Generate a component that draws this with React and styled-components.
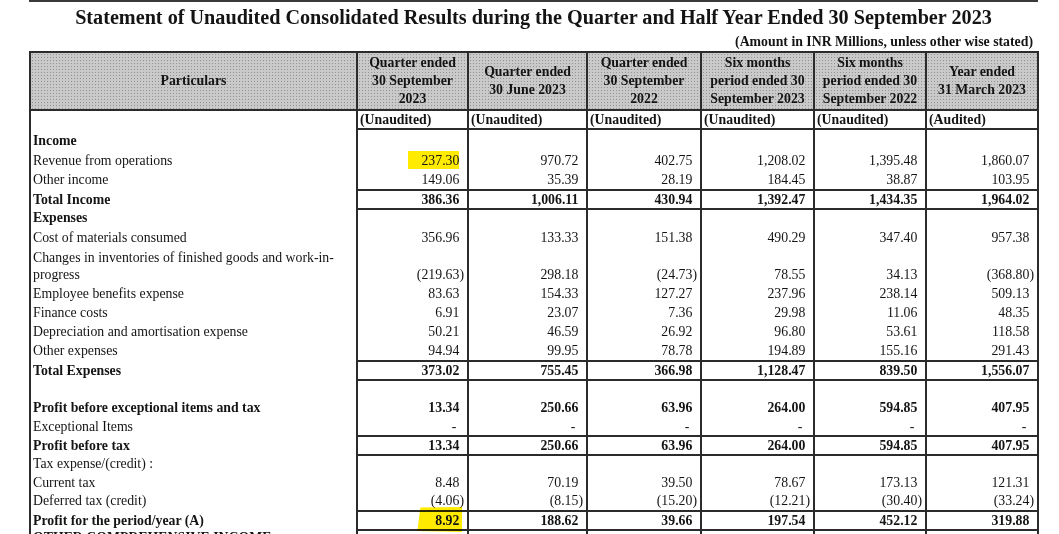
import React from "react";
import styled, { createGlobalStyle } from "styled-components";

const GlobalStyle = createGlobalStyle`
  html, body {
    margin: 0;
    padding: 0;
    background: #ffffff;
  }
  body {
    font-family: "Liberation Serif", "Times New Roman", serif;
    color: #141414;
  }
`;

const COLS = "327px 111px 119px 114px 113px 112px 112px";
const LINE = "2px solid #2b2b2b";

const Page = styled.div`
  width: 1059px;
  height: 534px;
  overflow: hidden;
  padding-left: 29px;
  box-sizing: border-box;
`;

const TopRule = styled.div`
  width: 1009px;
  border-top: 2px solid #3a3a3a;
`;

const Title = styled.h1`
  margin: 4px 0 0;
  width: 1009px;
  text-align: center;
  font-size: 20.2px;
  line-height: 23px;
  font-weight: bold;
`;

const Note = styled.div`
  margin-top: 5px;
  width: 1004px;
  text-align: right;
  font-size: 13.8px;
  line-height: 16px;
  font-weight: bold;
`;

const Table = styled.div`
  margin-top: 1px;
  width: 1010px;
  border-left: ${LINE};
  border-top: ${LINE};
  box-sizing: border-box;
  font-size: 13.8px;
`;

const Row = styled.div`
  display: grid;
  grid-template-columns: ${COLS};
  height: ${(p) => p.$h}px;
`;

const HeadCell = styled.div`
  display: flex;
  align-items: center;
  justify-content: center;
  text-align: center;
  font-weight: bold;
  line-height: 18px;
  box-sizing: border-box;
  border-right: ${LINE};
  border-bottom: ${LINE};
  background-color: #c9c9c9;
  background-image: radial-gradient(circle, rgba(95, 95, 95, 0.5) 0.7px, transparent 0.9px);
  background-size: 3px 3px;
`;

const AuditCell = styled.div`
  display: flex;
  align-items: center;
  padding-left: 2px;
  font-weight: bold;
  line-height: 17px;
  box-sizing: border-box;
  border-right: ${LINE};
  border-bottom: ${(p) => (p.$blank ? "none" : LINE)};
`;

const LabelCell = styled.div`
  display: flex;
  flex-direction: column;
  justify-content: center;
  padding-left: 2px;
  white-space: nowrap;
  font-weight: ${(p) => (p.$bold ? "bold" : "normal")};
  line-height: ${(p) => (p.$wrap ? "17px" : "19px")};
  box-sizing: border-box;
  border-right: ${LINE};
`;

const ValueCell = styled.div`
  display: flex;
  justify-content: flex-end;
  align-items: ${(p) => (p.$end ? "flex-end" : "center")};
  padding-right: 3px;
  padding-bottom: ${(p) => (p.$end ? "1px" : "0")};
  line-height: 17px;
  white-space: nowrap;
  font-weight: ${(p) => (p.$bold ? "bold" : "normal")};
  box-sizing: border-box;
  border-right: ${LINE};
  border-top: ${(p) => (p.$rule ? LINE : "none")};
  border-bottom: ${(p) => (p.$rule ? LINE : "none")};
`;

const Num = styled.span`
  padding-right: ${(p) => (p.$neg ? "0" : p.$dash ? "calc(0.333em + 3px)" : "0.333em")};
`;

const Mark = styled.span`
  display: inline-block;
  background: #ffeb00;
  mix-blend-mode: multiply;
  padding: ${(p) => (p.$brush ? "5px 3px 3px 18px" : "1px 0 0 13px")};
  margin: ${(p) => (p.$brush ? "-5px -3px -3px 0" : "-1px 0 0 0")};
  clip-path: ${(p) =>
    p.$brush ? "polygon(7% 2%, 100% 0, 99% 100%, 0 96%)" : "none"};
`;

const HEADS = [
  ["Quarter ended", "30 September", "2023"],
  ["Quarter ended", "30 June 2023"],
  ["Quarter ended", "30 September", "2022"],
  ["Six months", "period ended 30", "September 2023"],
  ["Six months", "period ended 30", "September 2022"],
  ["Year ended", "31 March 2023"],
];

const AUDIT = ["(Unaudited)", "(Unaudited)", "(Unaudited)", "(Unaudited)", "(Unaudited)", "(Audited)"];

const DASHES = ["-", "-", "-", "-", "-", "-"];
const PBT = ["13.34", "250.66", "63.96", "264.00", "594.85", "407.95"];

const ROWS = [
  { label: "Income", bold: true, h: 21 },
  { label: "Revenue from operations", h: 19, values: ["237.30", "970.72", "402.75", "1,208.02", "1,395.48", "1,860.07"], mark: "plain" },
  { label: "Other income", h: 19, values: ["149.06", "35.39", "28.19", "184.45", "38.87", "103.95"] },
  { label: "Total Income", bold: true, rule: true, h: 18, values: ["386.36", "1,006.11", "430.94", "1,392.47", "1,434.35", "1,964.02"] },
  { label: "Expenses", bold: true, h: 21 },
  { label: "Cost of materials consumed", h: 19, values: ["356.96", "133.33", "151.38", "490.29", "347.40", "957.38"] },
  { label: ["Changes in inventories of finished goods and work-in-", "progress"], h: 37, end: true, values: ["(219.63)", "298.18", "(24.73)", "78.55", "34.13", "(368.80)"] },
  { label: "Employee benefits expense", h: 19, values: ["83.63", "154.33", "127.27", "237.96", "238.14", "509.13"] },
  { label: "Finance costs", h: 19, values: ["6.91", "23.07", "7.36", "29.98", "11.06", "48.35"] },
  { label: "Depreciation and amortisation expense", h: 19, values: ["50.21", "46.59", "26.92", "96.80", "53.61", "118.58"] },
  { label: "Other expenses", h: 19, values: ["94.94", "99.95", "78.78", "194.89", "155.16", "291.43"] },
  { label: "Total Expenses", bold: true, rule: true, h: 19, values: ["373.02", "755.45", "366.98", "1,128.47", "839.50", "1,556.07"] },
  { label: "", h: 19 },
  { label: "Profit before exceptional items and tax", bold: true, h: 19, values: PBT },
  { label: "Exceptional Items", h: 18, values: DASHES },
  { label: "Profit before tax", bold: true, rule: true, h: 19, values: PBT },
  { label: "Tax expense/(credit) :", h: 19 },
  { label: "Current tax", h: 18, values: ["8.48", "70.19", "39.50", "78.67", "173.13", "121.31"] },
  { label: "Deferred tax (credit)", h: 19, values: ["(4.06)", "(8.15)", "(15.20)", "(12.21)", "(30.40)", "(33.24)"] },
  { label: "Profit for the period/year (A)", bold: true, rule: true, h: 18, values: ["8.92", "188.62", "39.66", "197.54", "452.12", "319.88"], mark: "brush" },
  { label: "OTHER COMPREHENSIVE INCOME", bold: true, h: 19 },
];

function Value({ text, mark }) {
  const neg = text.endsWith(")");
  const dash = text === "-";
  return (
    <Num $neg={neg} $dash={dash}>
      {mark ? <Mark $brush={mark === "brush"}>{text}</Mark> : text}
    </Num>
  );
}

function BodyRow({ row }) {
  const lines = Array.isArray(row.label) ? row.label : [row.label];
  return (
    <Row $h={row.h}>
      <LabelCell $bold={row.bold} $wrap={lines.length > 1}>
        {lines.map((l, i) => (
          <span key={i}>{l}</span>
        ))}
      </LabelCell>
      {[0, 1, 2, 3, 4, 5].map((i) => (
        <ValueCell key={i} $bold={row.bold} $rule={row.rule} $end={row.end}>
          {row.values && <Value text={row.values[i]} mark={i === 0 ? row.mark : null} />}
        </ValueCell>
      ))}
    </Row>
  );
}

export default function App() {
  return (
    <>
      <GlobalStyle />
      <Page>
        <TopRule />
        <Title>
          Statement of Unaudited Consolidated Results during the Quarter and Half Year Ended 30 September 2023
        </Title>
        <Note>(Amount in INR Millions, unless other wise stated)</Note>
        <Table>
          <Row $h={58}>
            <HeadCell>Particulars</HeadCell>
            {HEADS.map((h, i) => (
              <HeadCell key={i}>
                <div>
                  {h.map((line, j) => (
                    <div key={j}>{line}</div>
                  ))}
                </div>
              </HeadCell>
            ))}
          </Row>
          <Row $h={19}>
            <AuditCell $blank />
            {AUDIT.map((a, i) => (
              <AuditCell key={i}>{a}</AuditCell>
            ))}
          </Row>
          {ROWS.map((r, i) => (
            <BodyRow key={i} row={r} />
          ))}
        </Table>
      </Page>
    </>
  );
}
